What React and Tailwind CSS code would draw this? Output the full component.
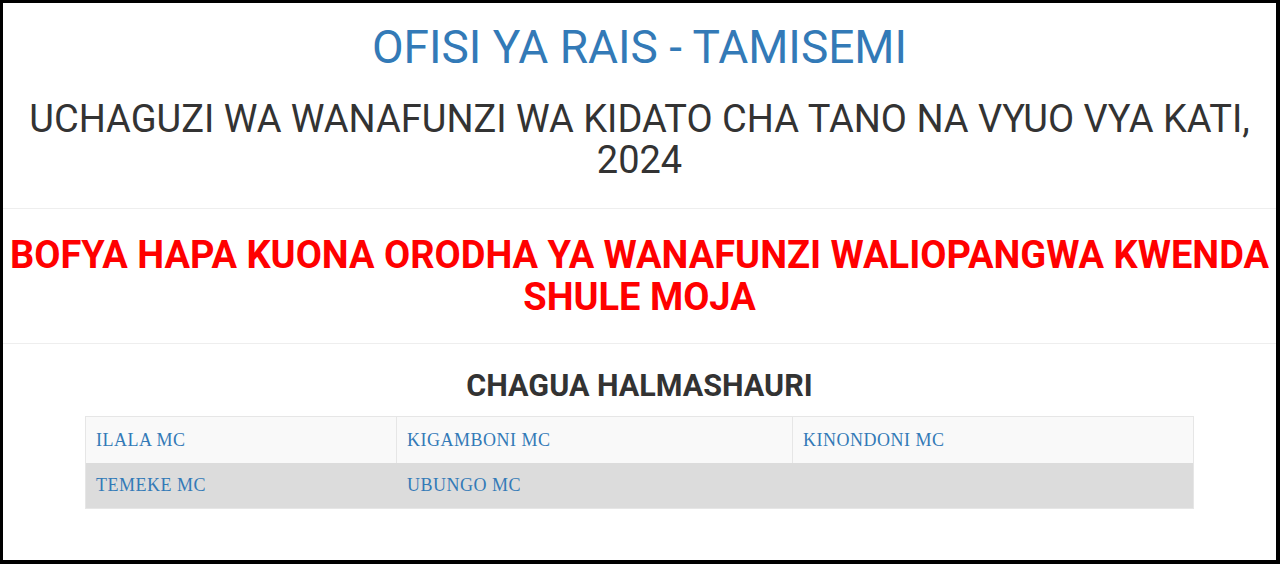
export default function App() {
  const rows = [
    ["ILALA MC", "KIGAMBONI MC", "KINONDONI MC"],
    ["TEMEKE MC", "UBUNGO MC", ""],
  ];
  return (
    <div className="h-[564px] box-border overflow-hidden bg-white border-black border-l-[3px] border-t-[3px] border-r-[4px] border-b-[4px] font-['Roboto',sans-serif]">
      <h1 className="mt-[19px] text-center text-[46px] leading-[1.1] text-[#337ab7] font-normal">
        OFISI YA RAIS - TAMISEMI
      </h1>
      <h2 className="mt-[26px] text-center text-[38px] leading-[1.1] text-[#333] font-normal">
        UCHAGUZI WA WANAFUNZI WA KIDATO CHA TANO NA VYUO VYA KATI, 2024
      </h2>
      <div className="mt-[26px] border-t border-[#eee]"></div>
      <h2 className="mt-[26px] text-center text-[38px] leading-[1.1] text-[#ff0000] font-bold">
        BOFYA HAPA KUONA ORODHA YA WANAFUNZI WALIOPANGWA KWENDA SHULE MOJA
      </h2>
      <div className="mt-[24px] border-t border-[#eee]"></div>
      <h3 className="mt-[25px] text-center text-[30.5px] leading-[1.1] text-[#333] font-bold">
        CHAGUA HALMASHAURI
      </h3>
      <div className="mt-[14px] mx-auto w-[1109px] border border-[#e6e6e6] font-['Liberation_Serif',serif] text-[18px] tracking-[0.5px] text-[#337ab7]">
        {rows.map((r, i) => (
          <div
            key={i}
            className={
              "grid grid-cols-[310px_396px_1fr] " +
              (i === 0 ? "bg-[#f9f9f9] h-[46px]" : "bg-[#dcdcdc] h-[45px]")
            }
          >
            {r.map((c, j) => (
              <div
                key={j}
                className={
                  "flex items-center px-[10px] " +
                  (j > 0 ? (i === 0 ? "border-l border-[#e6e6e6]" : "border-l border-[#dcdcdc]") : "")
                }
              >
                {c}
              </div>
            ))}
          </div>
        ))}
      </div>
    </div>
  );
}
